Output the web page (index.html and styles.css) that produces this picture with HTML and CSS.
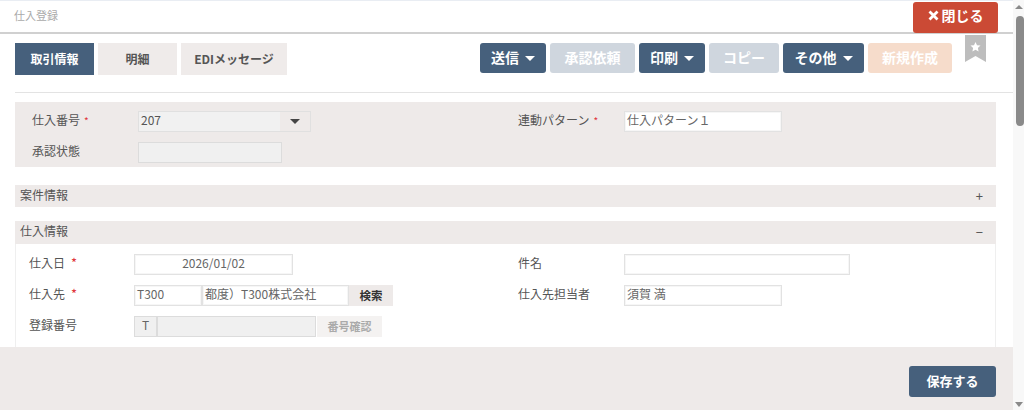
FILE: index.html
```html
<!DOCTYPE html>
<html lang="ja">
<head>
<meta charset="utf-8">
<title>仕入登録</title>
<link rel="stylesheet" href="styles.css">
</head>
<body>
<div class="app">
  <main class="main">
    <div class="content">
      <header class="header">
        <h1 class="title">仕入登録</h1>
        <button class="close"><svg class="close-x" width="11" height="11" viewBox="0 0 11 11"><path d="M1.500 1.500L9.500 9.500M9.500 1.500L1.500 9.500" stroke="#fff" stroke-width="2.800" fill="none"/></svg>閉じる</button>
      </header>
      <div class="toolbar">
        <nav class="tabs">
          <a class="tab tab-active tab-a">取引情報</a>
          <a class="tab tab-b">明細</a>
          <a class="tab tab-c">EDIメッセージ</a>
        </nav>
        <div class="actions">
          <button class="btn w66">送信<i class="caret"></i></button>
          <button class="btn btn-off w85">承認依頼</button>
          <button class="btn w66">印刷<i class="caret"></i></button>
          <button class="btn btn-off w70">コピー</button>
          <button class="btn w81">その他<i class="caret"></i></button>
          <button class="btn btn-new w84">新規作成</button>
          <svg class="bookmark" width="21" height="27" viewBox="0 0 21 27"><path d="M0 0H21V27L10.500 21L0 27Z" fill="#bdbdbd"/><path d="M10.500 7l1.500 3.200 3.500.4-2.600 2.400.7 3.500-3.100-1.800-3.100 1.800.7-3.500L5.500 10.600l3.500-.4z" fill="#fff"/></svg>
        </div>
      </div>
      <section class="top-panel">
        <div class="row">
          <div class="cell">
            <label class="label label-top">仕入番号<em class="req-s">*</em></label>
            <div class="select"><span class="select-val">207</span><span class="select-btn"><i class="caret caret-dark"></i></span></div>
          </div>
          <div class="cell cell-right">
            <label class="label label-right">連動パターン<em class="req-s">*</em></label>
            <div class="input w158">仕入パターン１</div>
          </div>
        </div>
        <div class="row">
          <div class="cell">
            <label class="label label-top">承認状態</label>
            <div class="input input-off w144"></div>
          </div>
        </div>
      </section>
      <div class="sec-head sec-1"><span class="sec-title">案件情報</span><span class="sec-sign">+</span></div>
      <div class="sec-head sec-2"><span class="sec-title">仕入情報</span><span class="sec-sign">−</span></div>
      <section class="sec-body">
        <div class="row">
          <div class="cell">
            <label class="label label-sec">仕入日<em class="req">*</em></label>
            <div class="input w159 center">2026/01/02</div>
          </div>
          <div class="cell cell-right2">
            <label class="label label-right">件名</label>
            <div class="input w226"></div>
          </div>
        </div>
        <div class="row">
          <div class="cell">
            <label class="label label-sec">仕入先<em class="req">*</em></label>
            <div class="group">
              <div class="input w69">T300</div>
              <div class="input w147 joined">都度）T300株式会社</div>
              <button class="search">検索</button>
            </div>
          </div>
          <div class="cell cell-right2">
            <label class="label label-right">仕入先担当者</label>
            <div class="input w158">須賀 満</div>
          </div>
        </div>
        <div class="row">
          <div class="cell">
            <label class="label label-sec">登録番号</label>
            <div class="group">
              <div class="input input-off w23 center">T</div>
              <div class="input input-off w159 joined"></div>
              <button class="confirm">番号確認</button>
            </div>
          </div>
        </div>
      </section>
    </div>
    <footer class="footer"><button class="save">保存する</button></footer>
  </main>
  <div class="scrollbar">
    <span class="arrow-up"></span>
    <span class="thumb"></span>
    <span class="arrow-down"></span>
  </div>
</div>
</body>
</html>
```

FILE: styles.css
```css
* { box-sizing: border-box; }
html, body { margin: 0; height: 100%; overflow: hidden; }
body {
  background: #fff;
  font-family: "Noto Sans CJK JP", "Liberation Sans", sans-serif;
  font-size: 12px;
  color: #555;
}
button { font-family: inherit; border: 0; padding: 0; }
em { font-style: normal; }

.app { display: flex; width: 1024px; height: 410px; }
.main { width: 1013px; height: 410px; display: flex; flex-direction: column; }
.content { height: 347px; overflow: hidden; }

.header {
  height: 34px;
  padding: 2px 15px 0 14px;
  border-top: 1px solid #e9edf3;
  border-bottom: 2px solid #d0d0d0;
  display: flex;
  justify-content: space-between;
  margin-bottom: -1px;
}
.title { margin: 0; font-size: 11px; font-weight: 400; color: #aaa; line-height: 24px; }
.close {
  width: 85px; height: 31px; margin-top: -1px;
  background: #cb4a35; color: #fff; border-radius: 3px;
  font-size: 14px; font-weight: 700; position: relative; line-height: 26px;
  display: flex; align-items: flex-start; justify-content: center;
}
.close-x { margin: 8px 3px 0 0; }

.toolbar {
  height: 60px;
  margin: 0 0 0 15px;
  padding-top: 10px;
  width: 998px;
  border-bottom: 1px solid #e3e3e3;
  display: flex;
  justify-content: space-between;
  align-items: flex-start;
}
.tabs { display: flex; gap: 4px; }
.tab {
  height: 32px; display: flex; align-items: center; justify-content: center;
  background: #efebea; color: #555; font-weight: 700; font-size: 12px;
  padding-bottom: 2px;
}
.tab-a { width: 79px; }
.tab-b { width: 79px; }
.tab-c { width: 106px; }
.tab-active { background: #46607c; color: #fff; }

.actions { display: flex; gap: 4px; position: relative; padding-right: 61px; }
.btn {
  height: 30px; border-radius: 3px; background: #46607c; color: #fff;
  font-size: 14px; font-weight: 700; padding-bottom: 3px;
  display: flex; align-items: center; justify-content: center;
}
.btn-off { background: #cfd6de; }
.btn-new { background: #f6dccb; }
.w66 { width: 66px; }
.w85 { width: 85px; }
.w70 { width: 70px; }
.w81 { width: 81px; }
.w84 { width: 84px; }
.caret {
  display: inline-block; width: 0; height: 0; margin: 3px 0 0 6px;
  border-left: 5px solid transparent; border-right: 5px solid transparent;
  border-top: 5px solid #fff;
}
.caret-dark { margin: 0; border-top-color: #444; }
.bookmark { position: absolute; right: 27px; top: -8px; }

.top-panel {
  margin: 9px 17px 0 15px; height: 65px; padding-top: 9px;
  background: #eeeae9;
  display: flex; flex-direction: column; gap: 10px;
}
.row { display: flex; height: 21px; }
.cell { display: flex; align-items: center; }
.cell-right { margin-left: 0; }
.label { font-size: 12px; color: #555; display: block; padding-bottom: 4px; }
.label-top { width: 123px; padding-left: 17px; flex: none; }
.label-sec { width: 120px; padding-left: 15px; flex: none; }
.label-right { width: 106px; flex: none; }
.req-s { color: #e0343a; margin-left: 4px; font-size: 10px; }
.req { color: #e0343a; margin-left: 6px; font-size: 13px; }

.input {
  height: 21px; padding: 0 2px; line-height: 16px;
  background: #fff; border: 1px solid #e2e2e2; box-shadow: inset 0 0 0 1px #f6f6f6;
  font-size: 12px; color: #666; white-space: nowrap; overflow: hidden;
  flex: none;
}
.input-off { background: #f0f0f0; border-color: #dcdcdc; box-shadow: none; }
.center { text-align: center; }
.joined { margin-left: 0; }
.w158 { width: 158px; }
.w144 { width: 144px; }
.w159 { width: 159px; }
.w226 { width: 226px; }
.w69 { width: 68px; }
.w147 { width: 147px; }
.w23 { width: 23px; }

.select { display: flex; width: 173px; height: 21px; background: #f1f1f1; border: 1px solid #e0e0e0; flex: none; }
.select-val { flex: 1; font-size: 12px; padding-left: 2px; line-height: 16px; }
.select-btn { width: 30px; display: flex; align-items: center; justify-content: center; background: #eeeae9; }

.cell:first-child { width: 503px; }

.sec-head {
  margin: 0 17px 0 15px; padding: 0 13px 0 5px;
  background: #eeeae9; color: #555; font-size: 12px;
  display: flex; align-items: center; justify-content: space-between;
}
.sec-title { padding-bottom: 4px; }
.sec-1 { height: 22px; margin-top: 18px; }
.sec-2 { height: 23px; margin-top: 14px; }
.sec-sign { font-size: 13px; color: #555; padding-bottom: 2px; }

.sec-body {
  margin: 0 17px 0 15px; height: 103px; padding-top: 10px;
  border-left: 1px solid #efefef; border-right: 1px solid #efefef;
  display: flex; flex-direction: column; gap: 10px;
}
.sec-body .row:first-child { margin-top: 0; }
.sec-body .cell-right2 { margin-left: 0; }
.sec-body .cell:first-child { width: 502px; }
.sec-body .cell:first-child .label-sec { width: 118px; padding-left: 13px; }

.group { display: flex; }
.search {
  width: 44px; height: 21px; background: #eeeae9; color: #333;
  font-size: 11.500px; font-weight: 700; padding-bottom: 2px;
}
.confirm {
  width: 65px; height: 21px; background: #f4f2f1; color: #aaa;
  font-size: 11px; font-weight: 700; margin-left: 1px; padding-bottom: 2px;
}

.footer {
  height: 63px; background: #eeeae9; padding: 19px 17px 0 0;
  display: flex; justify-content: flex-end;
}
.save {
  width: 87px; height: 31px; border-radius: 3px;
  background: #46607c; color: #fff; font-size: 13px; font-weight: 700; padding-bottom: 3px;
}

.scrollbar {
  width: 11px; height: 410px; background: #f8f8f8;
  display: flex; flex-direction: column; align-items: flex-end; padding-right: 0;
}
.thumb { width: 8px; height: 110px; margin-top: 7px; background: #8a8a8a; border-radius: 4px; }
.arrow-up {
  width: 0; height: 0; margin: 5px 1px 0 0;
  border-left: 4px solid transparent; border-right: 4px solid transparent;
  border-bottom: 4px solid #8a8a8a;
}
.arrow-down {
  width: 0; height: 0; margin: auto 1px 3px 0;
  border-left: 4px solid transparent; border-right: 4px solid transparent;
  border-top: 5px solid #8a8a8a;
}
```
